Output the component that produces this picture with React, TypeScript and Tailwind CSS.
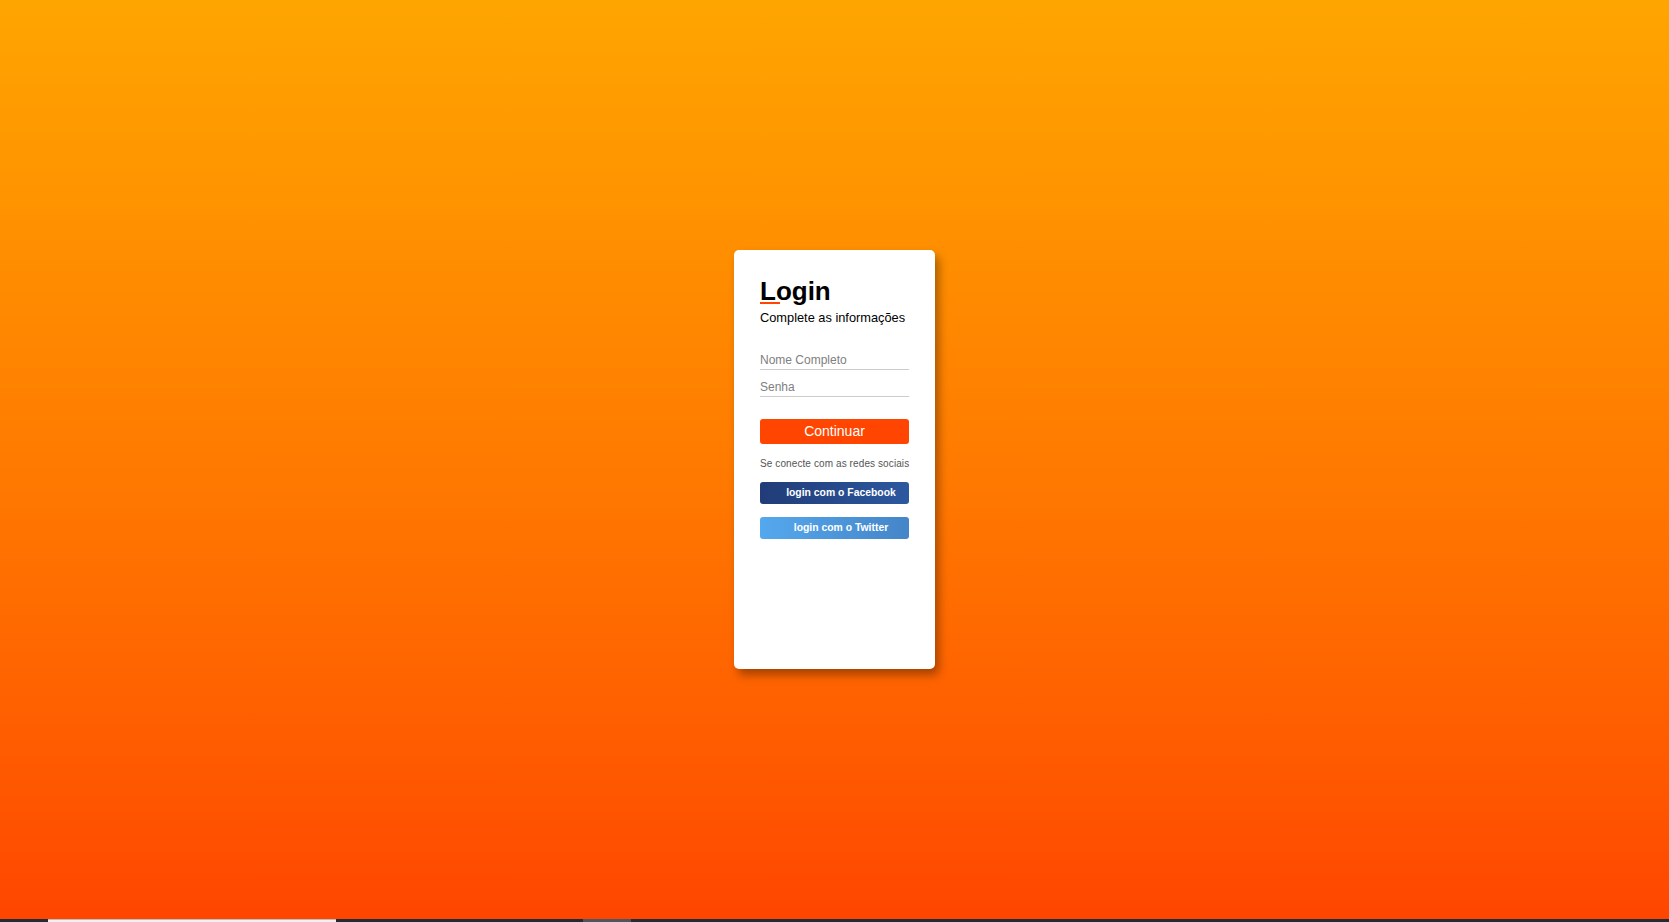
export default function App() {
  return (
    <div className="h-[922px] w-full flex flex-col overflow-hidden font-['Liberation_Sans',Arial,sans-serif]">
      <div className="h-[919px] w-full bg-gradient-to-b from-[#ffa500] to-[#ff4500] flex items-center justify-center">
        <div className="w-[201px] h-[419px] bg-white rounded-[5px] shadow-[4px_6px_10px_rgba(0,0,0,0.35)] px-[26px] pt-[26px] flex flex-col">
          <h1 className="relative text-[26px] leading-[30px] font-bold text-black">
            Login
            <span className="absolute left-0 top-[26px] w-[20px] h-[2px] bg-[#ff4500]" />
          </h1>
          <p className="mt-[4px] text-[12.8px] leading-[16px] text-black">Complete as informações</p>

          <input
            placeholder="Nome Completo"
            className="mt-[22px] w-full h-[22px] text-[12px] text-[#555] placeholder-[#808080] border-b border-[#cccccc] outline-none pt-[2px]"
          />
          <input
            type="password"
            placeholder="Senha"
            className="mt-[5px] w-full h-[22px] text-[12px] text-[#555] placeholder-[#808080] border-b border-[#cccccc] outline-none pt-[2px]"
          />

          <button className="mt-[22px] w-full h-[25px] rounded-[3px] bg-[#ff4500] text-white text-[14px] leading-[25px]">
            Continuar
          </button>

          <p className="mt-[14px] text-[10px] leading-[12px] text-[#555] tracking-[0.1px] whitespace-nowrap">
            Se conecte com as redes sociais
          </p>

          <button className="mt-[12px] w-full h-[22px] rounded-[3px] bg-gradient-to-r from-[#213c78] to-[#2c58a0] text-white text-[10.4px] font-bold leading-[22px] pl-[13px]">
            login com o Facebook
          </button>
          <button className="mt-[13px] w-full h-[22px] rounded-[3px] bg-gradient-to-r from-[#55a8ee] to-[#4585c8] text-white text-[10.4px] font-bold leading-[22px] pl-[13px]">
            login com o Twitter
          </button>
        </div>
      </div>
      <div className="h-[3px] w-full bg-[#1f2b36] flex">
        <div className="w-[48px]" />
        <div className="w-[288px] bg-[#f0f0f0] border-t border-[#bdbdbd]" />
        <div className="w-[247px]" />
        <div className="w-[48px] bg-[#4a5661]" />
      </div>
    </div>
  );
}
